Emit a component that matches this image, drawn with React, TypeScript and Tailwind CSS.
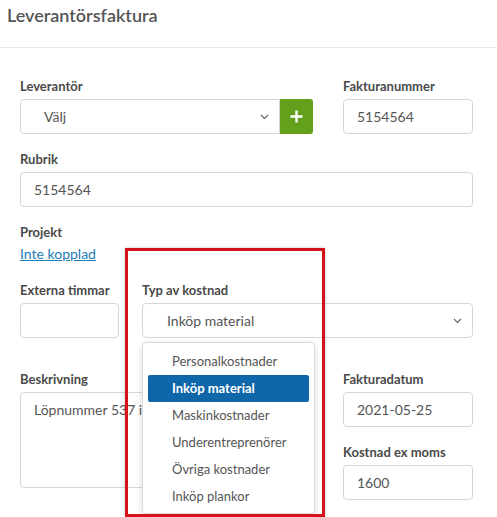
import React from "react";

const Chevron = () => (
  <svg width="9" height="6" viewBox="0 0 9 6" fill="none">
    <polyline points="1,1 4.5,4.5 8,1" stroke="#666" strokeWidth="1.2" />
  </svg>
);

const Label = ({ children }: { children: React.ReactNode }) => (
  <div className="text-[13px] leading-[18px] font-bold text-[#4a4a4a] mb-[4px]">{children}</div>
);

const Input = ({ value, className = "" }: { value?: string; className?: string }) => (
  <div
    className={`h-[35px] border border-[#d6d6d6] rounded-[4px] flex items-center pl-[13px] text-[14px] text-[#555] bg-white ${className}`}
  >
    {value}
  </div>
);

const items = [
  "Personalkostnader",
  "Inköp material",
  "Maskinkostnader",
  "Underentreprenörer",
  "Övriga kostnader",
  "Inköp plankor",
];

export default function App() {
  return (
    <div className="w-[497px] h-[517px] bg-white relative overflow-hidden font-['Lato',sans-serif]">
      <div className="h-[48px] border-b border-[#e6e6e6] px-[7px] pt-[5px]">
        <div className="text-[18px] leading-[20px] font-semibold text-[#555]">Leverantörsfaktura</div>
      </div>

      <div className="pl-5 pr-6 pt-[29px] flex flex-col">
        {/* Row 1 */}
        <div className="flex gap-[30px]">
          <div className="w-[293px]">
            <Label>Leverantör</Label>
            <div className="flex">
              <div className="flex-1 h-[35px] border border-[#d6d6d6] rounded-l-[4px] flex items-center justify-between pl-[23px] pr-[10px] text-[14px] text-[#555]">
                <span>Välj</span>
                <Chevron />
              </div>
              <div className="w-[33px] h-[35px] bg-[#63a11d] rounded-r-[3px] flex items-center justify-center">
                <svg width="13" height="13" viewBox="0 0 13 13">
                  <path d="M6.5 0.5v12M0.5 6.5h12" stroke="white" strokeWidth="2.4" />
                </svg>
              </div>
            </div>
          </div>
          <div className="w-[130px]">
            <Label>Fakturanummer</Label>
            <Input value="5154564" />
          </div>
        </div>

        {/* Rubrik */}
        <div className="mt-[16px]">
          <Label>Rubrik</Label>
          <Input value="5154564" />
        </div>

        {/* Projekt */}
        <div className="mt-[16px]">
          <Label>Projekt</Label>
          <div className="text-[14px] leading-[18px] text-[#1d7db7] underline">Inte kopplad</div>
        </div>

        {/* Row 3 */}
        <div className="mt-[18px] flex gap-[23px]">
          <div className="w-[99px]">
            <Label>Externa timmar</Label>
            <Input />
          </div>
          <div className="flex-1 relative">
            <Label>Typ av kostnad</Label>
            <div className="h-[35px] border border-[#d6d6d6] rounded-[4px] flex items-center justify-between pl-[24px] pr-[10px] text-[14px] text-[#555]">
              <span>Inköp material</span>
              <Chevron />
            </div>
            <div className="absolute left-0 top-full mt-[4px] w-[173px] bg-white border border-[#dcdcdc] rounded-[4px] shadow-[0_2px_6px_rgba(0,0,0,0.15)] pt-[5px] pb-[3px] z-10">
              {items.map((it) => {
                const sel = it === "Inköp material";
                return (
                  <div
                    key={it}
                    className={
                      sel
                        ? "h-[27px] mx-[5px] rounded-[2px] bg-[#0f67a9] text-white font-bold flex items-center pl-[24px] text-[13px]"
                        : "h-[27px] flex items-center pl-[29px] text-[13px] text-[#555]"
                    }
                  >
                    {it}
                  </div>
                );
              })}
            </div>
          </div>
        </div>

        {/* Row 4 */}
        <div className="mt-[32px] flex gap-[30px]">
          <div className="w-[293px]">
            <Label>Beskrivning</Label>
            <div className="h-[96px] border border-[#d6d6d6] rounded-[4px] px-[13px] pt-[7px] text-[14px] text-[#555] leading-[20px] overflow-hidden">
              Löpnummer 537 i
            </div>
          </div>
          <div className="w-[130px]">
            <Label>Fakturadatum</Label>
            <Input value="2021-05-25" />
            <div className="mt-[16px]">
              <Label>Kostnad ex moms</Label>
              <Input value="1600" />
            </div>
          </div>
        </div>
      </div>

      {/* red annotation box */}
      <div className="absolute left-[125px] top-[248px] w-[200px] h-[269px] border-[3px] border-[#d3121b] shadow-[0_0_3px_rgba(0,0,0,0.25)] z-20 pointer-events-none" />
    </div>
  );
}
